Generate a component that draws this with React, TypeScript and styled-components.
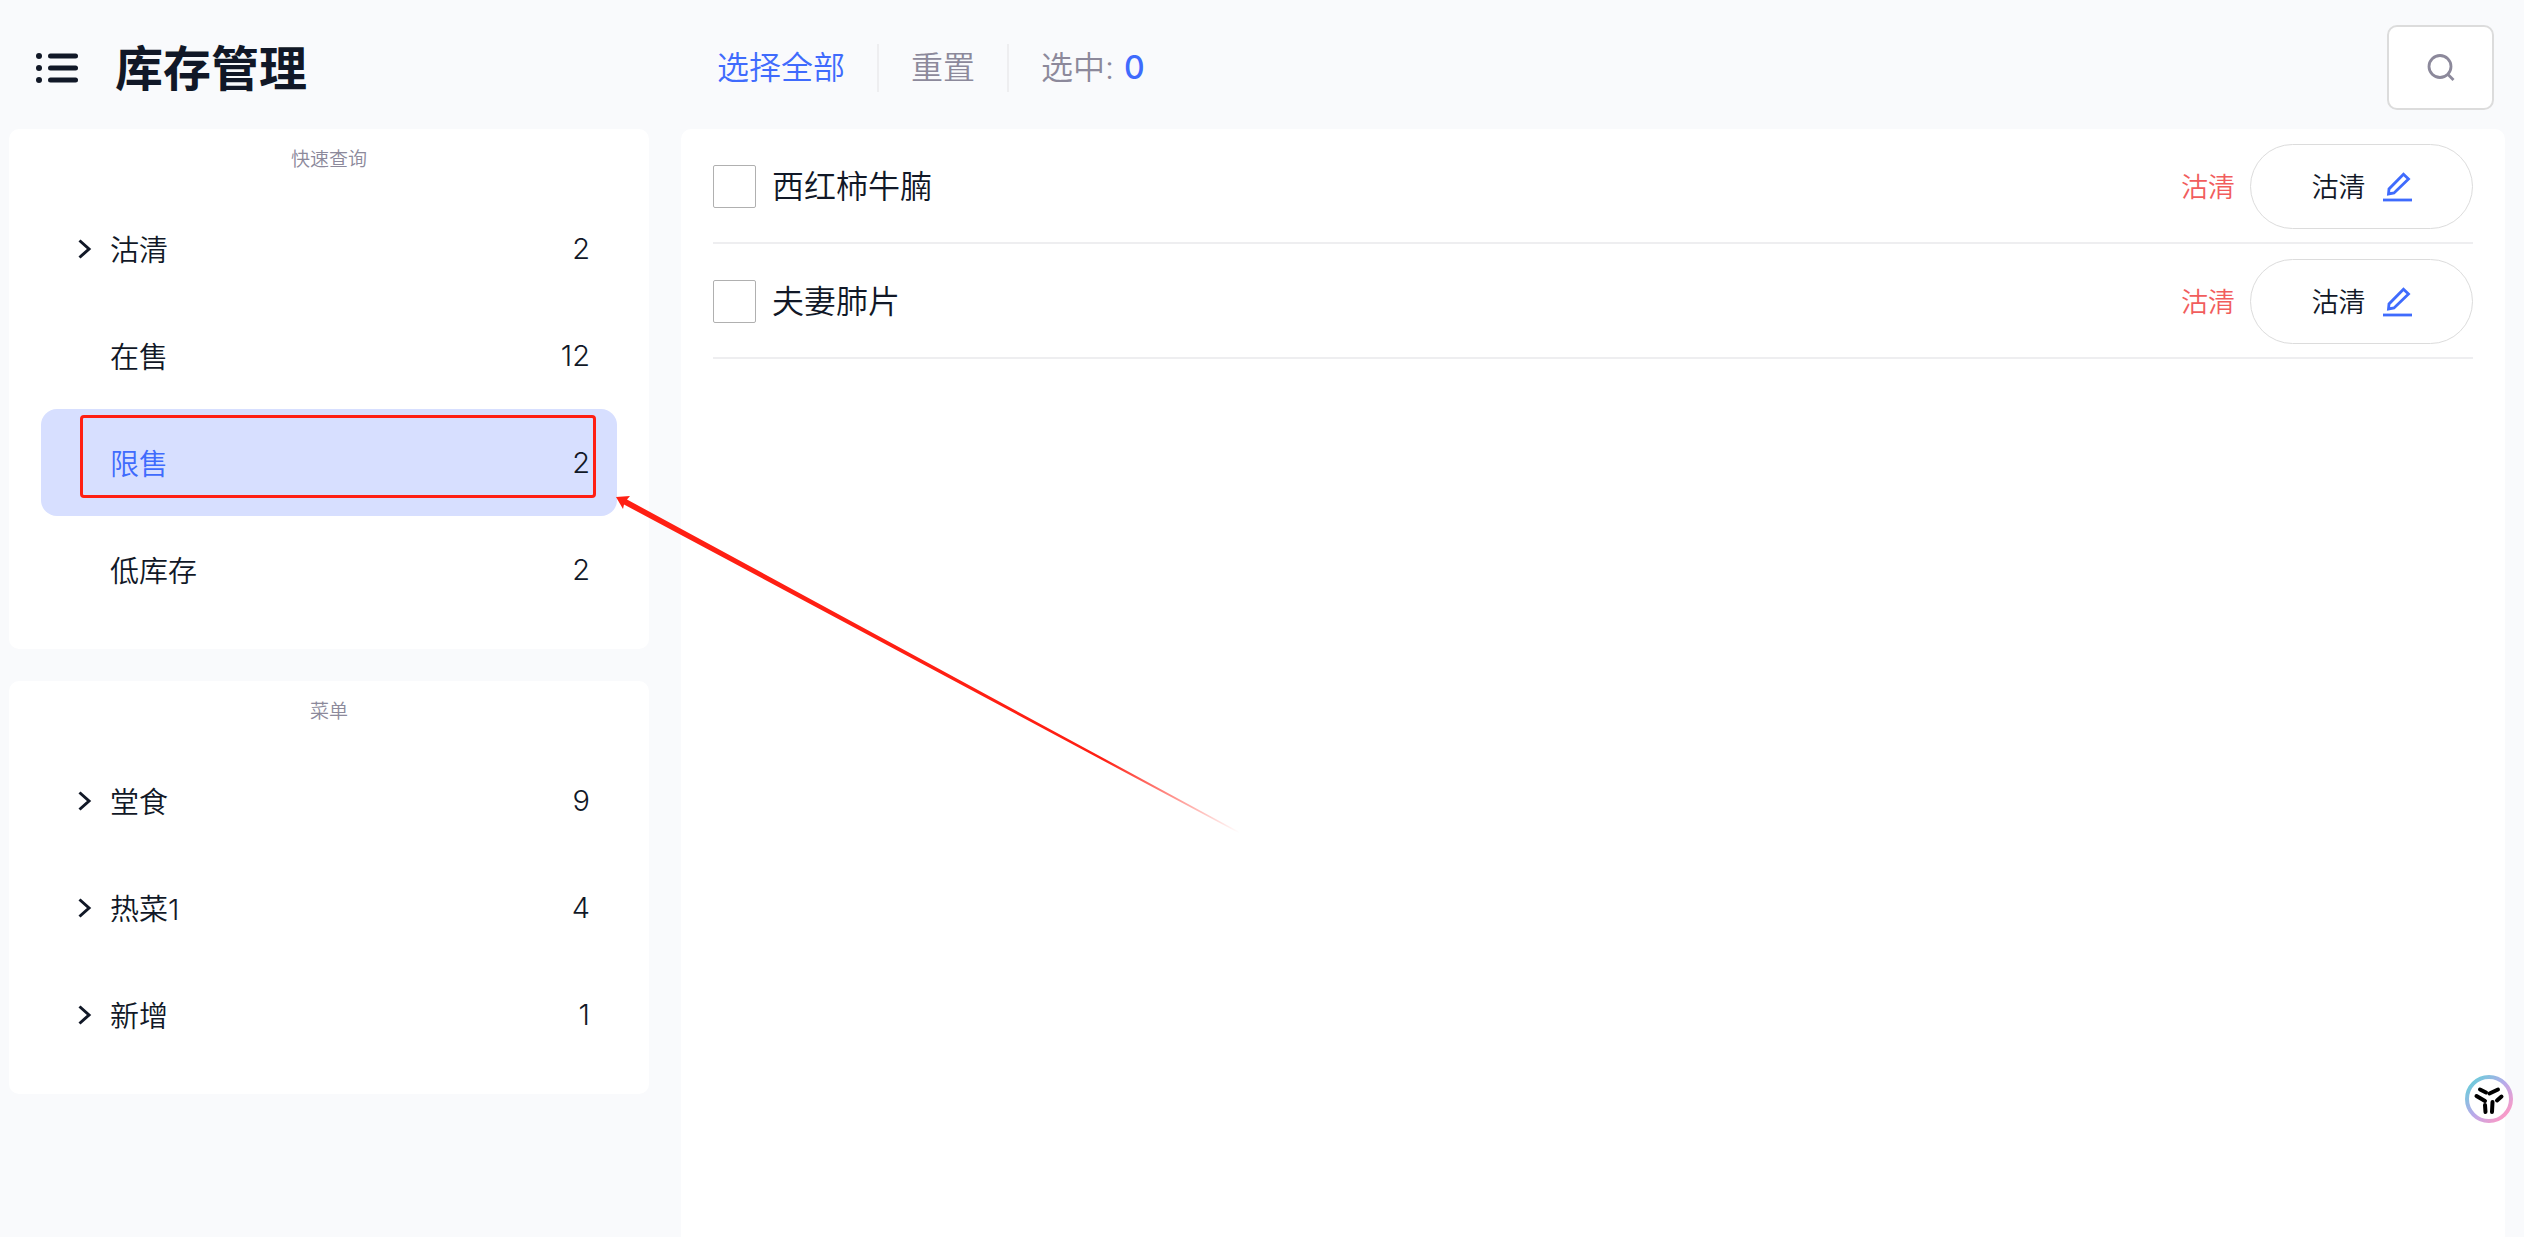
import React from "react";
import styled, { createGlobalStyle } from "styled-components";

const color = {
  page: "#f9fafc",
  panel: "#ffffff",
  ink: "#111827",
  blue: "#3f6bfd",
  muted: "#8c899b",
  red: "#f15d5d",
  line: "#eeeef0",
  border: "#dcdcdc",
  active: "#d7dfff",
  mark: "#ff1f13",
};

const GlobalStyle = createGlobalStyle`
  *, *::before, *::after { box-sizing: border-box; }
  body {
    margin: 0;
    background: ${color.page};
    color: ${color.ink};
    font-family: Inter, "Noto Sans CJK SC", sans-serif;
    font-size: 29px;
    font-weight: 350;
  }
  button {
    margin: 0;
    padding: 0;
    border: 0;
    background: none;
    color: inherit;
    font: inherit;
    cursor: pointer;
  }
  h1, h2, ul { margin: 0; padding: 0; }
  ul { list-style: none; }
  svg { display: block; flex: none; }
`;

const Page = styled.div`
  position: relative;
  display: grid;
  grid-template-columns: 640px minmax(0, 1fr);
  grid-template-rows: 129px 1fr;
  column-gap: 32px;
  min-height: 100vh;
  padding: 0 19px 0 9px;
`;

const Brand = styled.header`
  display: flex;
  align-items: center;
  gap: 37px;
  padding: 6px 0 0 27px;
`;

const Title = styled.h1`
  padding-top: 2px;
  font-size: 48px;
  line-height: 64px;
  font-weight: 700;
`;

const Toolbar = styled.div`
  display: flex;
  align-items: center;
  justify-content: space-between;
  padding: 6px 11px 0 36px;
`;

const Actions = styled.div`
  display: flex;
  align-items: center;
  gap: 32px;
  font-size: 32px;
  line-height: 48px;
`;

const Action = styled.button<{ $primary?: boolean }>`
  color: ${(p) => (p.$primary ? color.blue : color.muted)};
`;

const Divider = styled.span`
  width: 2px;
  height: 48px;
  background: ${color.line};
`;

const Selected = styled.span`
  display: flex;
  gap: 10px;
  color: ${color.muted};
`;

const SelectedCount = styled.span`
  color: ${color.blue};
  font-weight: 500;
`;

const SearchButton = styled.button`
  display: flex;
  align-items: center;
  justify-content: center;
  width: 107px;
  height: 85px;
  border: 2px solid ${color.border};
  border-radius: 10px;
  background: ${color.panel};
  color: ${color.muted};
`;

const Sidebar = styled.aside`
  display: flex;
  flex-direction: column;
  gap: 32px;
`;

const Card = styled.section`
  padding: 0 32px 26px;
  border-radius: 10px;
  background: ${color.panel};
`;

const CardTitle = styled.h2`
  height: 66px;
  padding-top: 17px;
  color: ${color.muted};
  font-size: 19px;
  line-height: 28px;
  font-weight: 350;
  text-align: center;
`;

const Item = styled.li`
  position: relative;
`;

const ItemButton = styled.button<{ $active?: boolean }>`
  display: grid;
  grid-template-columns: 32px 1fr auto;
  align-items: center;
  width: 100%;
  height: 107px;
  padding: 0 27px 0 37px;
  border-radius: 16px;
  background: ${(p) => (p.$active ? color.active : "transparent")};
  text-align: left;
`;

const ItemName = styled.span<{ $active?: boolean }>`
  grid-column: 2;
  padding-bottom: 2px;
  color: ${(p) => (p.$active ? color.blue : color.ink)};
`;

const Highlight = styled.span`
  position: absolute;
  inset: 6px 21px 18px 39px;
  border: 3px solid ${color.mark};
  border-radius: 4px;
  pointer-events: none;
`;

const Arrow = styled.svg`
  position: absolute;
  left: 616px;
  top: 496px;
  pointer-events: none;
`;

const Main = styled.main`
  padding: 0 32px;
  border-radius: 10px 10px 0 0;
  background: ${color.panel};
`;

const Dish = styled.li`
  display: flex;
  align-items: center;
  height: 115px;
  padding-top: 2px;
  border-bottom: 2px solid ${color.line};
`;

const DishLabel = styled.label`
  display: flex;
  flex: 1;
  align-items: center;
  gap: 16px;
  font-size: 32px;
  line-height: 48px;
`;

const Checkbox = styled.input`
  appearance: none;
  width: 43px;
  height: 43px;
  margin: 0;
  border: 1px solid #b0b0b0;
  border-radius: 2px;
  background: ${color.panel};
  &:checked { background: ${color.blue}; }
`;

const Status = styled.span`
  margin-right: 15px;
  padding-bottom: 2px;
  color: ${color.red};
  font-size: 27px;
`;

const EditButton = styled.button`
  display: flex;
  align-items: center;
  justify-content: center;
  gap: 17px;
  width: 223px;
  height: 85px;
  border: 1px solid ${color.border};
  border-radius: 43px;
  font-size: 27px;
`;

const EditText = styled.span`
  padding-bottom: 2px;
`;

const Assistant = styled.button`
  position: absolute;
  right: 11px;
  bottom: 114px;
`;

const ListIcon = () => (
  <svg width="42" height="32" viewBox="0 0 42 32" fill={color.ink}>
    {[4, 16, 28].map((y) => (
      <g key={y}>
        <circle cx="3" cy={y} r="3" />
        <rect x="12" y={y - 2.5} width="30" height="5" rx="2.5" />
      </g>
    ))}
  </svg>
);

const Chevron = () => (
  <svg width="14" height="20" viewBox="0 0 14 20" fill="none">
    <path d="M1.5 1.5 11 10 1.5 18.5" stroke={color.ink} strokeWidth="3" />
  </svg>
);

const SearchIcon = () => (
  <svg width="28" height="28" viewBox="0 0 28 28" fill="none" stroke="currentColor" strokeWidth="2.8">
    <circle cx="13" cy="12.5" r="11" />
    <path d="m20.5 20 6 6" />
  </svg>
);

const PencilIcon = () => (
  <svg width="29" height="30" viewBox="0 0 29 30" fill="none" stroke={color.blue} strokeWidth="2.8">
    <path d="M20.5 2.2 25.5 7 11 21 5.5 22 6 17Z" />
    <path d="M0 28h29" />
  </svg>
);

const AssistantIcon = () => (
  <svg width="48" height="48" viewBox="0 0 48 48" fill="none">
    <defs>
      <linearGradient id="ring" x1="8" y1="8" x2="40" y2="40" gradientUnits="userSpaceOnUse">
        <stop offset="0" stopColor="#74c8dc" />
        <stop offset="0.5" stopColor="#b9a9ea" />
        <stop offset="1" stopColor="#f79bc9" />
      </linearGradient>
    </defs>
    <circle cx="24" cy="24" r="22" fill="#fff" stroke="url(#ring)" strokeWidth="4" />
    <g stroke="#000" strokeWidth="4" strokeLinecap="round">
      <path d="m15 14.5 6 3" />
      <path d="m24.5 18.5 8.5-4" />
      <path d="m11.5 21 8.5 5" />
      <path d="m32 25.500 4.500-4" />
      <path d="m20 30 .5 7" />
      <path d="m27.5 27-.5 10" />
    </g>
  </svg>
);

type Entry = { name: string; count: number; expandable?: boolean; active?: boolean };

const quickQueries: Entry[] = [
  { name: "沽清", count: 2, expandable: true },
  { name: "在售", count: 12 },
  { name: "限售", count: 2, active: true },
  { name: "低库存", count: 2 },
];

const menus: Entry[] = [
  { name: "堂食", count: 9, expandable: true },
  { name: "热菜1", count: 4, expandable: true },
  { name: "新增", count: 1, expandable: true },
];

const dishes = ["西红柿牛腩", "夫妻肺片"];

const NavCard = ({ title, entries }: { title: string; entries: Entry[] }) => (
  <Card>
    <CardTitle>{title}</CardTitle>
    <ul>
      {entries.map((e) => (
        <Item key={e.name}>
          <ItemButton type="button" $active={e.active}>
            {e.expandable && <Chevron />}
            <ItemName $active={e.active}>{e.name}</ItemName>
            <span>{e.count}</span>
          </ItemButton>
          {e.active && <Highlight />}
        </Item>
      ))}
    </ul>
  </Card>
);

export default function App() {
  return (
    <>
      <GlobalStyle />
      <Page>
        <Brand>
          <button type="button" aria-label="菜单">
            <ListIcon />
          </button>
          <Title>库存管理</Title>
        </Brand>
        <Toolbar>
          <Actions>
            <Action type="button" $primary>选择全部</Action>
            <Divider />
            <Action type="button">重置</Action>
            <Divider />
            <Selected>
              选中:<SelectedCount>0</SelectedCount>
            </Selected>
          </Actions>
          <SearchButton type="button" aria-label="搜索">
            <SearchIcon />
          </SearchButton>
        </Toolbar>
        <Sidebar>
          <NavCard title="快速查询" entries={quickQueries} />
          <NavCard title="菜单" entries={menus} />
        </Sidebar>
        <Main>
          <ul>
            {dishes.map((name, i) => (
              <Dish key={name}>
                <DishLabel htmlFor={`dish-${i}`}>
                  <Checkbox type="checkbox" id={`dish-${i}`} />
                  {name}
                </DishLabel>
                <Status>沽清</Status>
                <EditButton type="button">
                  <EditText>沽清</EditText>
                  <PencilIcon />
                </EditButton>
              </Dish>
            ))}
          </ul>
        </Main>
        <Arrow width="632" height="342" viewBox="0 0 632 342">
          <defs>
            <linearGradient id="fade" x1="0" y1="0" x2="624" y2="336" gradientUnits="userSpaceOnUse">
              <stop offset="0" stopColor={color.mark} />
              <stop offset="0.78" stopColor={color.mark} />
              <stop offset="1" stopColor={color.mark} stopOpacity="0" />
            </linearGradient>
          </defs>
          <path d="M0 1 14 0 11 3.5 631 340 630 341 8 8.5 7 13Z" fill="url(#fade)" />
        </Arrow>
        <Assistant type="button" aria-label="助手">
          <AssistantIcon />
        </Assistant>
      </Page>
    </>
  );
}
